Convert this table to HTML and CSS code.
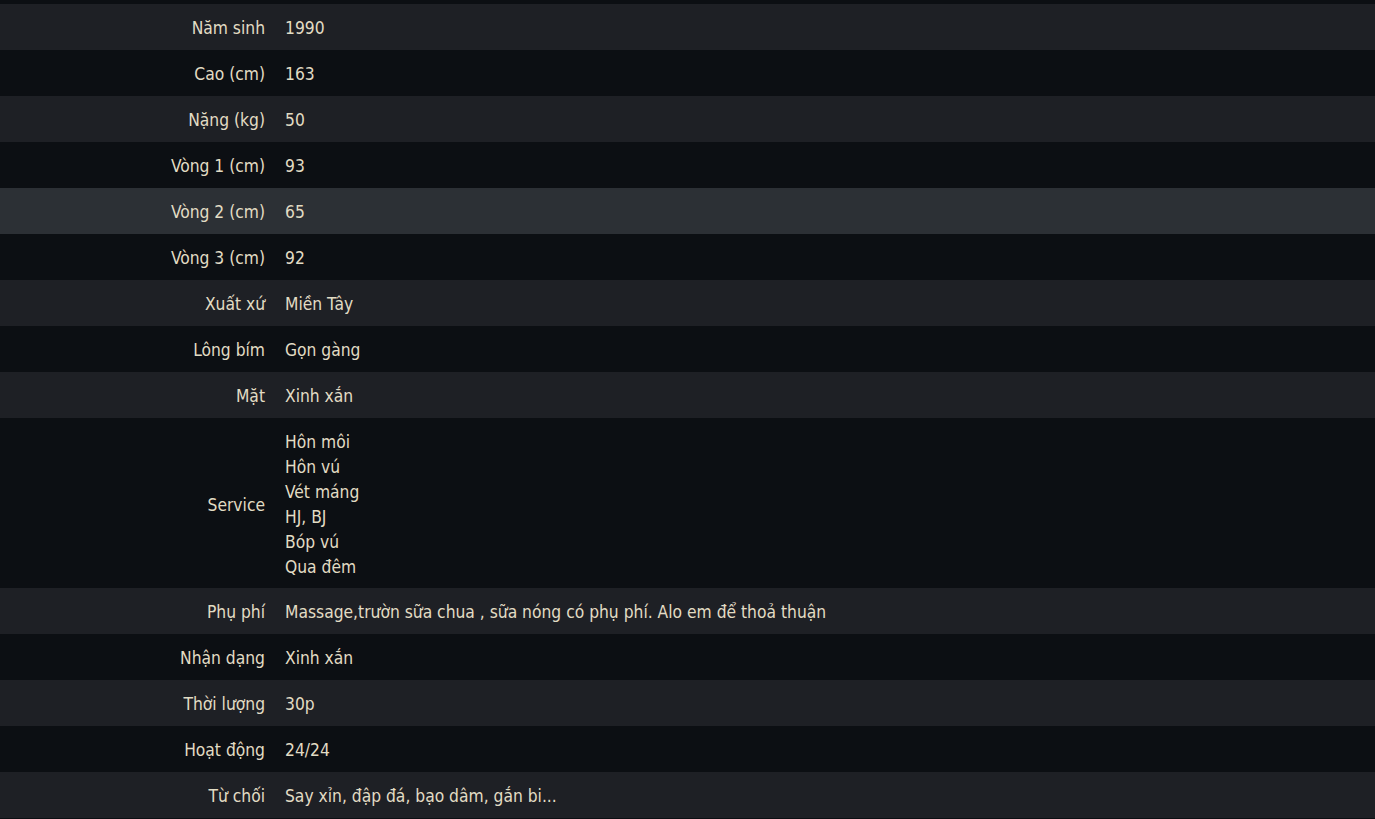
FILE: index.html
```html
<!DOCTYPE html>
<html lang="vi">
<head>
    <meta charset="UTF-8">
    <meta name="viewport" content="width=device-width, initial-scale=1.0">
    <title>Thông tin</title>
    <link rel="stylesheet" href="styles.css">
</head>
<body>
    <table class="info-table">
        <tr><td class="label">Năm sinh</td><td class="value">1990</td></tr>
        <tr><td class="label">Cao (cm)</td><td class="value">163</td></tr>
        <tr><td class="label">Nặng (kg)</td><td class="value">50</td></tr>
        <tr><td class="label">Vòng 1 (cm)</td><td class="value">93</td></tr>
        <tr class="active"><td class="label">Vòng 2 (cm)</td><td class="value">65</td></tr>
        <tr><td class="label">Vòng 3 (cm)</td><td class="value">92</td></tr>
        <tr><td class="label">Xuất xứ</td><td class="value">Miền Tây</td></tr>
        <tr><td class="label">Lông bím</td><td class="value">Gọn gàng</td></tr>
        <tr><td class="label">Mặt</td><td class="value">Xinh xắn</td></tr>
        <tr class="multi">
            <td class="label">Service</td>
            <td class="value">Hôn môi<br>Hôn vú<br>Vét máng<br>HJ, BJ<br>Bóp vú<br>Qua đêm</td>
        </tr>
        <tr><td class="label">Phụ phí</td><td class="value">Massage,trườn sữa chua , sữa nóng có phụ phí. Alo em để thoả thuận</td></tr>
        <tr><td class="label">Nhận dạng</td><td class="value">Xinh xắn</td></tr>
        <tr><td class="label">Thời lượng</td><td class="value">30p</td></tr>
        <tr><td class="label">Hoạt động</td><td class="value">24/24</td></tr>
        <tr><td class="label">Từ chối</td><td class="value">Say xỉn, đập đá, bạo dâm, gắn bi...</td></tr>
    </table>
</body>
</html>
```

FILE: styles.css
```css
body {
    margin: 0;
    padding-top: 4px;
    background-color: #0c0f13;
    font-family: "DejaVu Sans Condensed", "DejaVu Sans", sans-serif;
    font-size: 17.3px;
    color: #e2dcc4;
}

.info-table {
    width: 100%;
    border-collapse: collapse;
}

.info-table tr:nth-child(odd) {
    background-color: #1e2025;
}

.info-table tr:nth-child(even) {
    background-color: #0c0f13;
}

.info-table tr.active {
    background-color: #2c3035;
}

.info-table td {
    height: 46px;
    padding: 3px 10px 0;
    line-height: 25px;
    vertical-align: middle;
    box-sizing: border-box;
}

.info-table tr.multi td {
    height: 170px;
    padding: 12px 10px 8px;
}

.label {
    width: 20%;
    text-align: right;
}

.value {
    text-align: left;
}
```
